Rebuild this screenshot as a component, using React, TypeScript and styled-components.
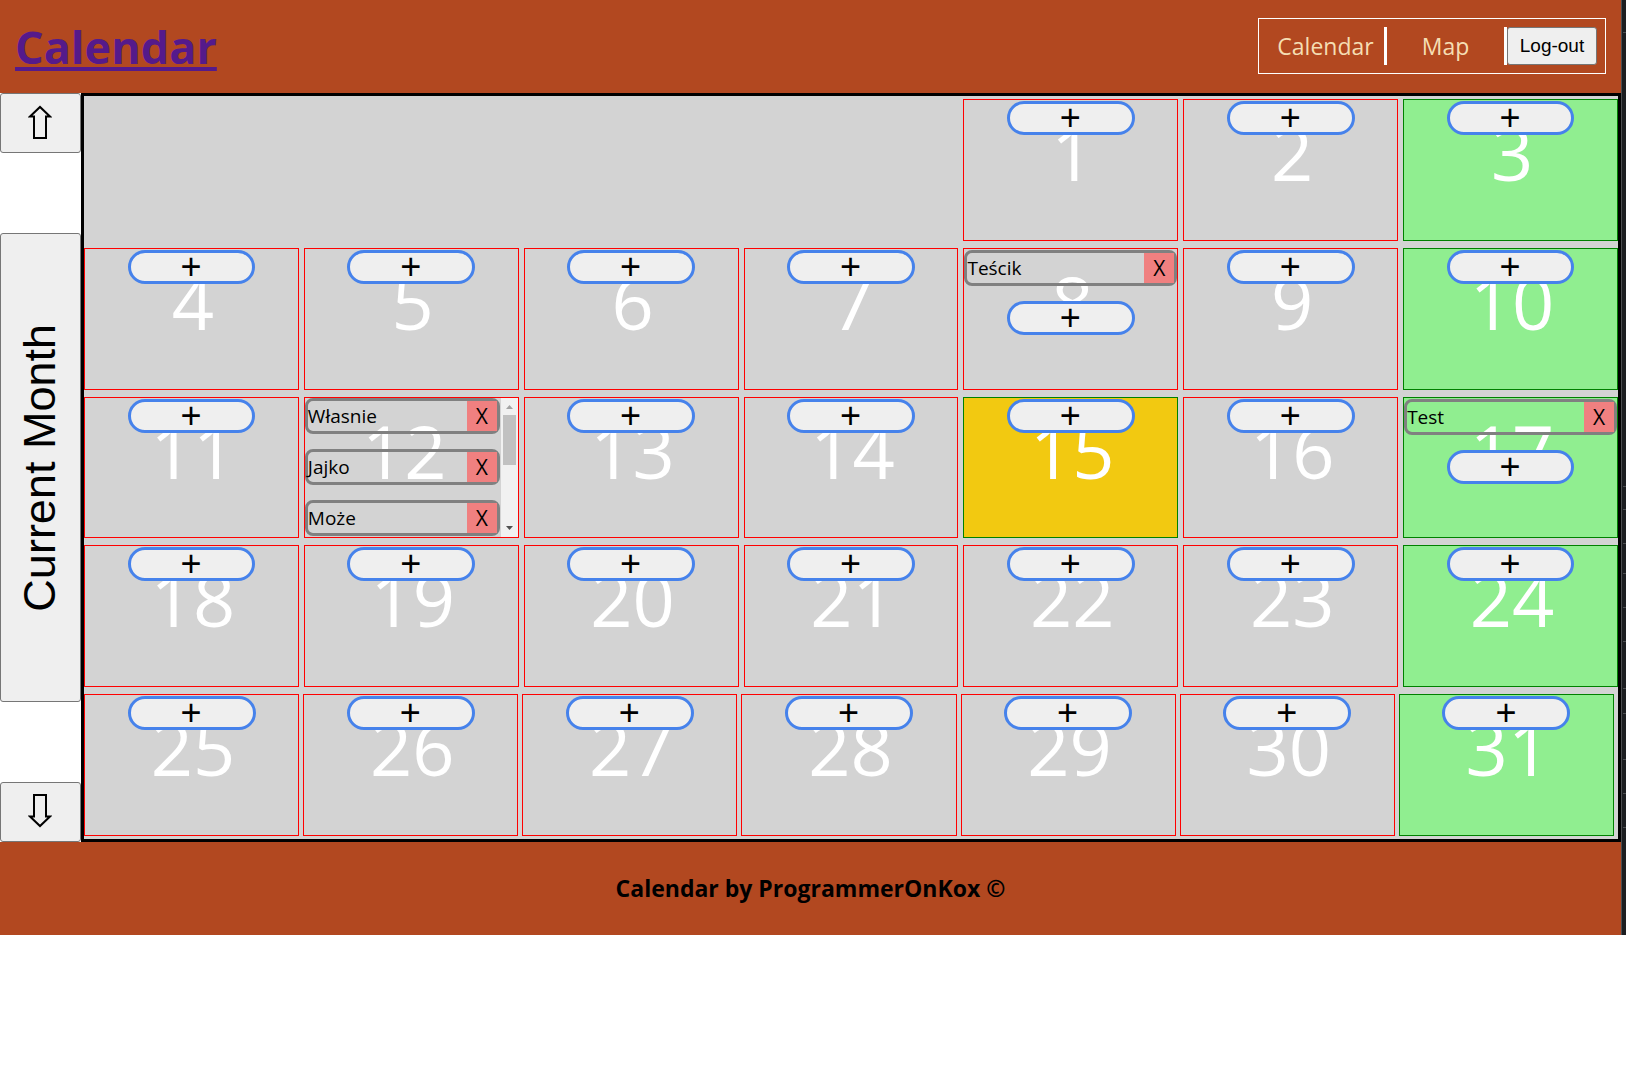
import React from "react";
import styled, { createGlobalStyle } from "styled-components";

const sans = `"Open Sans", "Noto Sans", sans-serif`;
const arial = `"Liberation Sans", Arial, sans-serif`;

const GlobalStyle = createGlobalStyle`
  *, *::before, *::after { box-sizing: border-box; }
  body { margin: 0; background: #fff; color: #000; font-family: ${sans}; }
`;

const Page = styled.div`
  display: grid;
  grid-template-columns: minmax(0, 1fr) 5px;
`;

const Site = styled.div`
  display: flex;
  flex-direction: column;
`;

const WindowEdge = styled.aside`
  display: flex;
  flex-direction: column;
  background: #1c1e21;
  border-left: 1px solid #4b4d50;
`;

const EdgeMark = styled.span<{ $gap: number }>`
  margin: ${(p) => p.$gap}px 0 0 1px;
  border-top: 1px solid #4b4d50;
`;

const Header = styled.header`
  display: flex;
  align-items: center;
  justify-content: space-between;
  height: 93px;
  padding: 0 15px 1px;
  background: #b24820;
`;

const Title = styled.h1`
  margin: 0;
  padding-top: 2px;
  font-size: 45px;
  line-height: 60px;
`;

const TitleLink = styled.a`
  color: #551a8b;
  text-decoration: underline;
  text-decoration-thickness: 4px;
  text-decoration-skip-ink: none;
  text-underline-offset: 3px;
`;

const Nav = styled.nav`
  display: flex;
  padding: 8px;
  border: 1px solid #fff;
`;

const NavLink = styled.a`
  width: 120px;
  border-right: 3px solid #fff;
  color: wheat;
  font-size: 23px;
  line-height: 38px;
  text-align: center;
  text-decoration: none;
`;

const BaseButton = styled.button`
  padding: 0;
  border: 1px solid #767676;
  border-radius: 3px;
  background: #efefef;
  color: #000;
  font-family: ${arial};
`;

const LogoutButton = styled(BaseButton)`
  width: 90px;
  font-size: 19px;
`;

const Main = styled.main`
  display: grid;
  grid-template-columns: 81px minmax(0, 1fr);
`;

const Sidebar = styled.div`
  display: flex;
  flex-direction: column;
  gap: 80px;
`;

const ArrowButton = styled(BaseButton)`
  display: flex;
  align-items: center;
  justify-content: center;
  height: 60px;
  padding: 0 1px 3px 0;
`;

const MonthButton = styled(BaseButton)`
  display: flex;
  flex: 1;
  align-items: center;
  justify-content: center;
  padding-right: 2px;
  font-size: 45px;
  line-height: 52px;
`;

const VerticalText = styled.span`
  writing-mode: vertical-rl;
  transform: rotate(180deg);
`;

const Month = styled.div`
  display: grid;
  grid-template-rows: repeat(5, minmax(0, 1fr));
  gap: 7px;
  min-height: 749px;
  padding: 3px 0;
  border: 3px solid #000;
  background: lightgray;
`;

const Week = styled.div<{ $last: boolean }>`
  display: grid;
  grid-template-columns: repeat(7, minmax(0, 1fr));
  column-gap: ${(p) => (p.$last ? 4 : 5)}px;
  padding-right: ${(p) => (p.$last ? 4 : 0)}px;
`;

type Kind = "plain" | "sunday" | "today";

const Day = styled.section<{ $kind: Kind; $column: number }>`
  display: flex;
  grid-column-start: ${(p) => p.$column};
  border: 1px solid ${(p) => (p.$kind === "plain" ? "red" : "green")};
  background: ${(p) =>
    ({ plain: "transparent", sunday: "lightgreen", today: "#f2c911" })[p.$kind]};
`;

const DayBody = styled.div`
  display: grid;
  flex: 1;
  min-width: 0;
  grid-template-columns: minmax(0, 1fr);
`;

const DayNumber = styled.span`
  grid-area: 1 / 1;
  padding-left: 3px;
  color: #fff;
  font-size: 74px;
  line-height: 106px;
  text-align: center;
`;

const DayContent = styled.div<{ $scrolls: boolean }>`
  display: flex;
  flex-direction: column;
  grid-area: 1 / 1;
  align-items: center;
  gap: 15px;
  z-index: 1;
  padding: ${(p) => (p.$scrolls ? "0 1px 0 0" : "1px 0 0")};
`;

const AddButton = styled.button`
  flex: none;
  width: 60%;
  height: 34px;
  padding: 0 1px 0 0;
  border: 3px solid #4682eb;
  border-radius: 17px;
  background: #efefef;
  color: #000;
  font-family: ${arial};
  font-size: 36px;
  line-height: 28px;
`;

const Event = styled.div`
  display: flex;
  flex: none;
  justify-content: space-between;
  align-self: stretch;
  height: 36px;
  border: 3px solid gray;
  border-radius: 8px;
  font-size: 19px;
  line-height: 30px;
`;

const RemoveButton = styled.button`
  width: 30px;
  padding: 0;
  border: 0;
  background: lightcoral;
  color: #000;
  font-family: ${sans};
  font-size: 21px;
  line-height: 28px;
`;

const ScrollTrack = styled.div`
  display: flex;
  flex-direction: column;
  align-items: center;
  width: 17px;
  background: #f1f1f1;
`;

const ScrollArrow = styled.svg`
  flex: none;
  width: 17px;
  height: 17px;
`;

const ScrollThumb = styled.div`
  width: 13px;
  height: 50px;
  margin-bottom: auto;
  background: #c1c1c1;
`;

const Footer = styled.footer`
  height: 93px;
  background: #b24820;
  font-size: 23px;
  font-weight: 700;
  line-height: 93px;
  text-align: center;
`;

const weeks = [
  [1, 2, 3],
  [4, 5, 6, 7, 8, 9, 10],
  [11, 12, 13, 14, 15, 16, 17],
  [18, 19, 20, 21, 22, 23, 24],
  [25, 26, 27, 28, 29, 30, 31],
];

const events: Record<number, string[]> = {
  8: ["Teścik"],
  12: ["Własnie", "Jajko", "Może"],
  17: ["Test"],
};

const today = 15;
const edgeMarks = [32, 453, 22, 33, 29, 33, 33, 46, 24, 45, 33, 33];

function Arrow({ down = false }: { down?: boolean }) {
  return (
    <svg width="24" height="34" viewBox="0 0 24 34" fill="none" stroke="#000" strokeWidth="2" aria-hidden="true">
      <path
        d={
          down
            ? "M6 1H18V22.5H22L12 32L2 22.5H6Z"
            : "M6 33H18V11.5H22L12 2L2 11.5H6Z"
        }
      />
    </svg>
  );
}

function DayCell({ day, column }: { day: number; column: number }) {
  const list = events[day] ?? [];
  const scrolls = list.length > 2;
  const kind: Kind = day === today ? "today" : column === 7 ? "sunday" : "plain";
  return (
    <Day $kind={kind} $column={column}>
      <DayBody>
        <DayNumber>{day}</DayNumber>
        <DayContent $scrolls={scrolls}>
          {list.map((name) => (
            <Event key={name}>
              <span>{name}</span>
              <RemoveButton type="button">X</RemoveButton>
            </Event>
          ))}
          {!scrolls && <AddButton type="button">+</AddButton>}
        </DayContent>
      </DayBody>
      {scrolls && (
        <ScrollTrack>
          <ScrollArrow viewBox="0 0 17 17">
            <path d="M5 11L8.5 7L12 11Z" fill="#a3a3a3" />
          </ScrollArrow>
          <ScrollThumb />
          <ScrollArrow viewBox="0 0 17 17">
            <path d="M5 6L8.5 10L12 6Z" fill="#505050" />
          </ScrollArrow>
        </ScrollTrack>
      )}
    </Day>
  );
}

export default function App() {
  return (
    <>
      <GlobalStyle />
      <Page>
        <Site>
          <Header>
            <Title>
              <TitleLink href="#">Calendar</TitleLink>
            </Title>
            <Nav>
              <NavLink href="#calendar">Calendar</NavLink>
              <NavLink href="#map">Map</NavLink>
              <LogoutButton type="button">Log-out</LogoutButton>
            </Nav>
          </Header>
          <Main>
            <Sidebar>
              <ArrowButton type="button" aria-label="Previous month">
                <Arrow />
              </ArrowButton>
              <MonthButton type="button">
                <VerticalText>Current Month</VerticalText>
              </MonthButton>
              <ArrowButton type="button" aria-label="Next month">
                <Arrow down />
              </ArrowButton>
            </Sidebar>
            <Month>
              {weeks.map((week, row) => (
                <Week key={row} $last={row === weeks.length - 1}>
                  {week.map((day, i) => (
                    <DayCell key={day} day={day} column={8 - week.length + i} />
                  ))}
                </Week>
              ))}
            </Month>
          </Main>
          <Footer>Calendar by ProgrammerOnKox ©</Footer>
        </Site>
        <WindowEdge>
          {edgeMarks.map((gap, i) => (
            <EdgeMark key={i} $gap={gap} />
          ))}
        </WindowEdge>
      </Page>
    </>
  );
}
